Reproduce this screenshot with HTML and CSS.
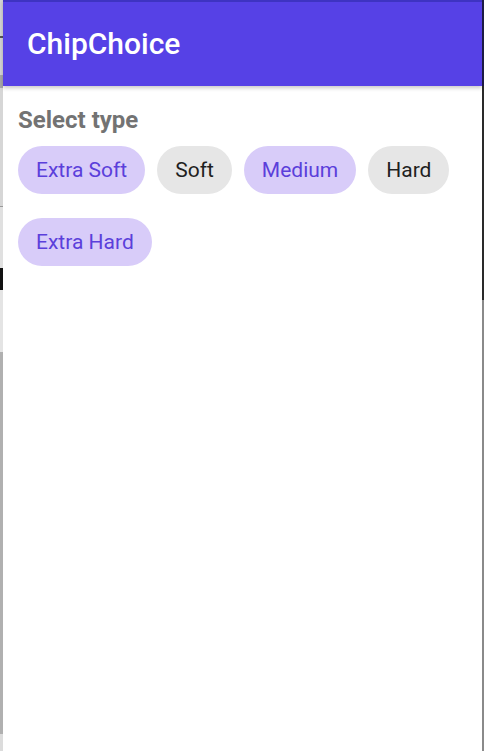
FILE: index.html
```html
<!DOCTYPE html>
<html lang="en">
<head>
<meta charset="utf-8">
<title>ChipChoice</title>
<link rel="stylesheet" href="styles.css">
</head>
<body>
<div class="frame">
  <div class="edge-left"></div>
  <div class="app">
    <header class="appbar">
      <h1 class="title">ChipChoice</h1>
    </header>
    <main class="content">
      <h2 class="label">Select type</h2>
      <div class="chips">
        <span class="chip chip-on">Extra Soft</span>
        <span class="chip">Soft</span>
        <span class="chip chip-on">Medium</span>
        <span class="chip">Hard</span>
        <span class="chip chip-on">Extra Hard</span>
      </div>
    </main>
  </div>
  <div class="edge-right"></div>
</div>
</body>
</html>
```
FILE: styles.css
```css
html, body {
  margin: 0;
  padding: 0;
  height: 100%;
  background: #ffffff;
}
body {
  font-family: Roboto, "Liberation Sans", Arial, sans-serif;
}
.frame {
  display: flex;
  height: 751px;
  width: 484px;
  overflow: hidden;
}
.edge-left {
  width: 3px;
  flex: 0 0 3px;
  background: linear-gradient(to bottom,
    #d4d4d4 0, #d4d4d4 36px, #555 36px, #555 38px,
    #d4d4d4 38px, #d4d4d4 75px, #a8a8a8 75px, #a8a8a8 88px,
    #d6d6d6 88px, #d6d6d6 206px, #999 206px, #999 207px,
    #e0e0e0 207px, #e0e0e0 268px, #111 268px, #111 290px,
    #e4e4e4 290px, #e4e4e4 352px, #b0b0b0 352px, #b0b0b0 734px,
    #dcdcdc 734px);
}
.edge-right {
  width: 2px;
  flex: 0 0 2px;
  background: linear-gradient(to bottom, #1f1d4a 0, #1f1d4a 86px, #2a2a2a 86px, #2a2a2a 300px, #8a8a8a 300px);
}
.app {
  flex: 1;
  display: flex;
  flex-direction: column;
  min-width: 0;
}
.appbar {
  height: 84px;
  background: #5641e6;
  border-top: 2px solid #3e33c2;
  box-shadow: 0 2px 4px rgba(0, 0, 0, 0.22);
  display: flex;
  align-items: center;
  padding: 0 24px;
  position: relative;
  z-index: 1;
}
.title {
  margin: 0;
  color: #ffffff;
  font-size: 30px;
  font-weight: 500;
  margin-top: -2px;
}
.content {
  padding: 20px 15px;
}
.label {
  margin: 0 0 12px 0;
  font-size: 24px;
  font-weight: 700;
  color: #737373;
  line-height: 28px;
}
.chips {
  display: flex;
  flex-wrap: wrap;
  column-gap: 12px;
  row-gap: 24px;
  width: 440px;
}
.chip {
  display: inline-flex;
  align-items: center;
  height: 48px;
  padding: 0 18px;
  border-radius: 24px;
  background: #e6e6e6;
  color: #1f1f1f;
  font-size: 21px;
}
.chip-on {
  background: #d8ccf9;
  color: #5b3fdb;
}
```
